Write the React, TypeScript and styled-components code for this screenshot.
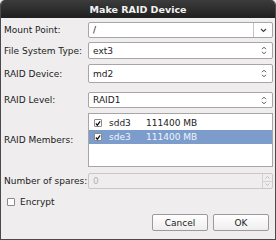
import { FC } from "react";
import styled, { createGlobalStyle } from "styled-components";

const GlobalStyle = createGlobalStyle`
  html, body {
    margin: 0;
    padding: 0;
    background: #efedee;
  }
  * {
    box-sizing: border-box;
  }
`;

const Window = styled.div`
  width: 276px;
  height: 240px;
  display: flex;
  flex-direction: column;
  background: #efedee;
  border: 1px solid #4a4a4a;
  border-top: none;
  border-radius: 5px 5px 0 0;
  overflow: hidden;
  font-family: "DejaVu Sans", sans-serif;
  font-size: 9px;
  color: #1c1c1c;
`;

const TitleBar = styled.div`
  height: 18px;
  flex: none;
  display: flex;
  align-items: center;
  justify-content: center;
  background: linear-gradient(#3c3c3c, #1f1f1f);
  color: #f2f2f2;
  font-weight: bold;
  font-size: 9.5px;
`;

const Body = styled.div`
  flex: 1;
  display: flex;
  flex-direction: column;
  padding: 4px 2px 0 2px;
`;

const Row = styled.div<{ top: number; h?: number }>`
  display: grid;
  grid-template-columns: 85px 1fr;
  align-items: center;
  margin-top: ${({ top }) => top}px;
  height: ${({ h }) => h ?? 17}px;
`;

const Label = styled.span<{ disabled?: boolean }>`
  padding-left: 1px;
  white-space: nowrap;
`;

const Field = styled.div<{ disabled?: boolean }>`
  height: 100%;
  display: flex;
  align-items: center;
  background: ${({ disabled }) => (disabled ? "#efedee" : "#ffffff")};
  border: 1px solid ${({ disabled }) => (disabled ? "#c9c7c8" : "#a7a5a6")};
  border-radius: 2px;
  color: ${({ disabled }) => (disabled ? "#b4b2b3" : "#1c1c1c")};
`;

const FieldText = styled.span`
  flex: 1;
  padding-left: 4px;
`;

const DropButton = styled.div`
  width: 19px;
  height: 100%;
  display: flex;
  align-items: center;
  justify-content: center;
  border-left: 1px solid #c6c4c5;
  color: #444;
`;

const ArrowSlot = styled.div`
  width: 16px;
  display: flex;
  align-items: center;
  justify-content: center;
  color: #555;
`;

const SpinBox = styled.div`
  width: 10px;
  height: 100%;
  display: flex;
  flex-direction: column;
  border-left: 1px solid #d3d1d2;
`;

const SpinPart = styled.div`
  flex: 1;
  display: flex;
  align-items: center;
  justify-content: center;
  border-bottom: 1px solid #d3d1d2;
  color: #c0bebf;
  &:last-child {
    border-bottom: none;
  }
`;

const List = styled.div`
  height: 100%;
  background: #ffffff;
  border: 1px solid #a7a5a6;
  padding-top: 2px;
`;

const ListRow = styled.div<{ selected?: boolean }>`
  height: 14px;
  display: flex;
  align-items: center;
  padding-left: 5px;
  background: ${({ selected }) => (selected ? "#7c9dcb" : "transparent")};
  color: ${({ selected }) => (selected ? "#eef3fb" : "#1c1c1c")};
`;

const Check = styled.span<{ on?: boolean; dark?: boolean }>`
  width: 8px;
  height: 8px;
  flex: none;
  display: flex;
  align-items: center;
  justify-content: center;
  background: #ffffff;
  border: 1px solid #8a8889;
  border-radius: 1px;
`;

const Device = styled.span`
  width: 44px;
  padding-left: 7px;
`;

const Size = styled.span``;

const EncryptRow = styled.label`
  display: flex;
  align-items: center;
  gap: 5px;
  margin-top: 8px;
  padding-left: 4px;
`;

const ButtonBar = styled.div`
  display: flex;
  justify-content: flex-end;
  gap: 5px;
  margin-top: 7px;
  padding-right: 4px;
`;

const Button = styled.button`
  width: 56px;
  height: 17px;
  padding: 0;
  font-family: inherit;
  font-size: 9px;
  color: #1c1c1c;
  background: linear-gradient(#ffffff, #eeeeee);
  border: 1px solid #9c9a9b;
  border-radius: 2px;
`;

const ChevronDown = () => (
  <svg width="7" height="5" viewBox="0 0 7 5">
    <path d="M1 1 L3.5 3.5 L6 1" fill="none" stroke="currentColor" strokeWidth="1.2" />
  </svg>
);

const UpDown = () => (
  <svg width="6" height="9" viewBox="0 0 6 9">
    <path d="M1 3.2 L3 1.2 L5 3.2 M1 5.8 L3 7.8 L5 5.8" fill="none" stroke="currentColor" strokeWidth="1" />
  </svg>
);

const Tick = () => (
  <svg width="7" height="7" viewBox="0 0 7 7">
    <path d="M1 3.5 L2.8 5.5 L6 1" fill="none" stroke="#111" strokeWidth="1.4" />
  </svg>
);

const Combo: FC<{ value: string }> = ({ value }) => (
  <Field>
    <FieldText>{value}</FieldText>
    <ArrowSlot>
      <UpDown />
    </ArrowSlot>
  </Field>
);

const members = [
  { dev: "sdd3", size: "111400 MB", selected: false },
  { dev: "sde3", size: "111400 MB", selected: true },
];

const App: FC = () => (
  <>
    <GlobalStyle />
    <Window>
      <TitleBar>Make RAID Device</TitleBar>
      <Body>
        <Row top={0} h={16}>
          <Label>Mount Point:</Label>
          <Field>
            <FieldText>/</FieldText>
            <DropButton>
              <ChevronDown />
            </DropButton>
          </Field>
        </Row>
        <Row top={4}>
          <Label>File System Type:</Label>
          <Combo value="ext3" />
        </Row>
        <Row top={5} h={19}>
          <Label>RAID Device:</Label>
          <Combo value="md2" />
        </Row>
        <Row top={9} h={16}>
          <Label>RAID Level:</Label>
          <Combo value="RAID1" />
        </Row>
        <Row top={5} h={54}>
          <Label>RAID Members:</Label>
          <List>
            {members.map((m) => (
              <ListRow key={m.dev} selected={m.selected}>
                <Check>
                  <Tick />
                </Check>
                <Device>{m.dev}</Device>
                <Size>{m.size}</Size>
              </ListRow>
            ))}
          </List>
        </Row>
        <Row top={6} h={16}>
          <Label>Number of spares:</Label>
          <Field disabled>
            <FieldText>0</FieldText>
            <SpinBox>
              <SpinPart>
                <svg width="5" height="3" viewBox="0 0 5 3">
                  <path d="M0.5 2.5 L2.5 0.5 L4.5 2.5" fill="none" stroke="currentColor" />
                </svg>
              </SpinPart>
              <SpinPart>
                <svg width="5" height="3" viewBox="0 0 5 3">
                  <path d="M0.5 0.5 L2.5 2.5 L4.5 0.5" fill="none" stroke="currentColor" />
                </svg>
              </SpinPart>
            </SpinBox>
          </Field>
        </Row>
        <EncryptRow>
          <Check />
          <span>Encrypt</span>
        </EncryptRow>
        <ButtonBar>
          <Button>Cancel</Button>
          <Button>OK</Button>
        </ButtonBar>
      </Body>
    </Window>
  </>
);

export default App;
